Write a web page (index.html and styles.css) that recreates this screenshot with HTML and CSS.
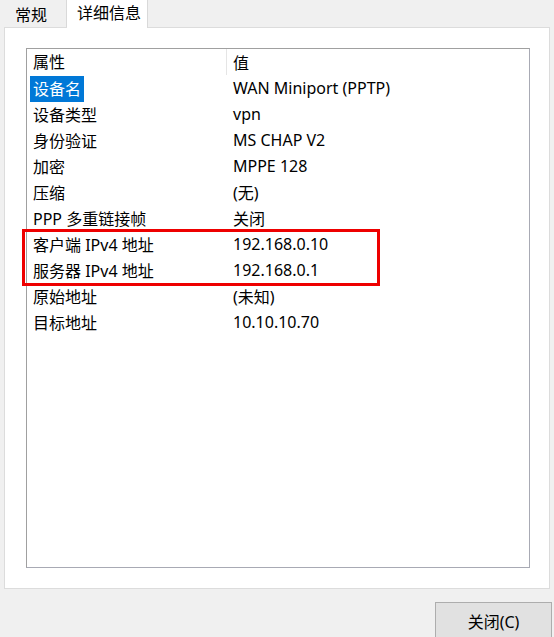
FILE: index.html
```html
<!DOCTYPE html>
<html lang="zh-CN">
<head>
<meta charset="UTF-8">
<title>详细信息</title>
<link rel="stylesheet" href="styles.css">
</head>
<body>

<div class="tabs">
    <div class="tab">常规</div>
    <div class="tab active">详细信息</div>
</div>

<div class="panel">
    <div class="list">
        <div class="row head">
            <div class="cell name">属性</div>
            <div class="cell value">值</div>
        </div>
        <div class="row">
            <div class="cell name"><span class="selected">设备名</span></div>
            <div class="cell value">WAN Miniport (PPTP)</div>
        </div>
        <div class="row">
            <div class="cell name">设备类型</div>
            <div class="cell value">vpn</div>
        </div>
        <div class="row">
            <div class="cell name">身份验证</div>
            <div class="cell value">MS CHAP V2</div>
        </div>
        <div class="row">
            <div class="cell name">加密</div>
            <div class="cell value">MPPE 128</div>
        </div>
        <div class="row">
            <div class="cell name">压缩</div>
            <div class="cell value">(无)</div>
        </div>
        <div class="row">
            <div class="cell name">PPP 多重链接帧</div>
            <div class="cell value">关闭</div>
        </div>
        <!-- 红框标出的两行 -->
        <div class="marked">
            <div class="row">
                <div class="cell name">客户端 IPv4 地址</div>
                <div class="cell value">192.168.0.10</div>
            </div>
            <div class="row">
                <div class="cell name">服务器 IPv4 地址</div>
                <div class="cell value">192.168.0.1</div>
            </div>
        </div>
        <div class="row">
            <div class="cell name">原始地址</div>
            <div class="cell value">(未知)</div>
        </div>
        <div class="row">
            <div class="cell name">目标地址</div>
            <div class="cell value">10.10.10.70</div>
        </div>
    </div>
</div>

<div class="footer">
    <button class="btn-close">关闭(C)</button>
</div>

</body>
</html>
```

FILE: styles.css
```css
/* 对话框样式 */
body {
    margin: 0;
    background-color: #f0f0f0;
    font-family: "Noto Sans", "Noto Sans CJK SC", sans-serif;
    font-size: 16px;
    color: #000;
}

.tabs {
    display: flex;
    height: 27px;
    align-items: flex-end;
}

.tab {
    width: 67px;
    height: 27px;
    box-sizing: border-box;
    padding-left: 15px;
    line-height: 31px;
    border-right: 1px solid #d9d9d9;
    background-color: #f0f0f0;
}

.tab.active {
    width: 81px;
    height: 28px;
    margin-bottom: -1px;
    padding-left: 10px;
    line-height: 26px;
    background-color: #fff;
    position: relative;
    z-index: 1;
}

.panel {
    margin-left: 4px;
    width: 546px;
    height: 562px;
    box-sizing: border-box;
    background-color: #fff;
    border: 1px solid #dcdcdc;
    padding: 20px 0 0 21px;
}

.list {
    width: 504px;
    height: 520px;
    box-sizing: border-box;
    border: 1px solid #a0a0a0;
    border-right-color: #a8aab4;
    border-bottom-color: #a8aab4;
}

.row {
    display: flex;
    height: 26px;
    align-items: center;
}

.cell.name {
    width: 200px;
    padding-left: 6px;
    box-sizing: border-box;
}

.cell.value {
    padding-left: 6px;
}

.head .cell.name {
    border-right: 1px solid #e5e5e5;
    height: 26px;
    line-height: 26px;
}

.selected {
    background-color: #0078d7;
    color: #fff;
    padding: 2px 3px;
    margin-left: -3px;
}

.marked {
    position: relative;
}

.marked::after {
    content: "";
    position: absolute;
    left: -5px;
    top: -2px;
    width: 358px;
    height: 57px;
    box-sizing: border-box;
    border: 3px solid #ee0000;
}

.footer {
    display: flex;
    justify-content: flex-end;
    padding: 13px 2px 0 0;
}

.btn-close {
    width: 117px;
    height: 37px;
    background-color: #e1e1e1;
    border: 1px solid #adadad;
    font-family: "Noto Sans", "Noto Sans CJK SC", sans-serif;
    font-size: 16px;
    color: #000;
    padding: 0;
}
```
